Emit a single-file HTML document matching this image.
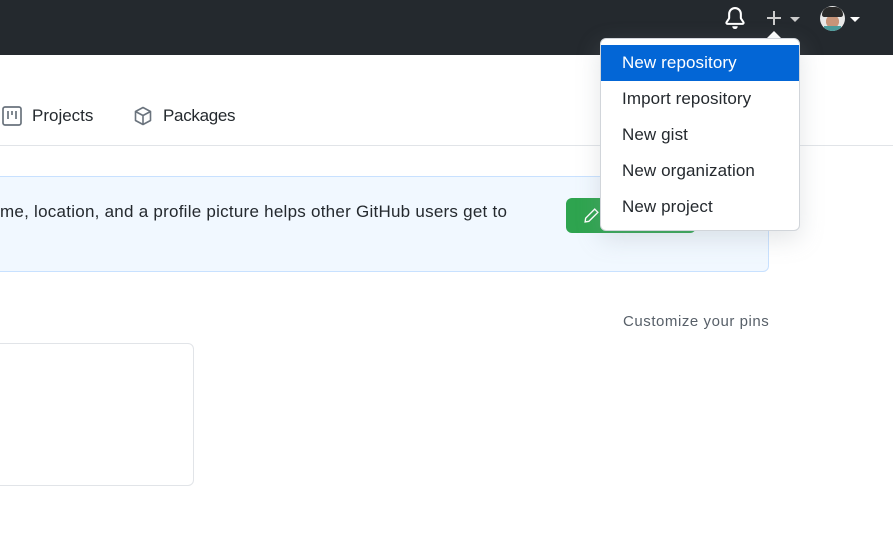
<!DOCTYPE html>
<html><head><meta charset="utf-8"><style>
*{box-sizing:border-box;margin:0;padding:0}
body{width:893px;height:539px;overflow:hidden;background:#fff;font-family:"Liberation Sans",sans-serif;color:#24292e;position:relative}
.hdr{position:absolute;left:0;top:0;width:893px;height:55px;background:#24292e}
.abs{position:absolute}
.tab{position:absolute;top:106px;font-size:17px;color:#24292e}
.line{position:absolute;left:0;top:145px;width:893px;height:1px;background:#e1e4e8}
.banner{position:absolute;left:-10px;top:176px;width:779px;height:96px;background:#f1f8ff;border:1px solid #c8e1ff;border-radius:6px}
.btn{position:absolute;left:566px;top:198px;width:130px;height:35px;background:#2ea44f;border-radius:6px}
.card{position:absolute;left:-10px;top:343px;width:204px;height:143px;border:1px solid #e1e4e8;border-radius:6px}
.dd{position:absolute;left:600px;top:38px;width:200px;height:193px;background:#fff;border:1px solid #d1d5da;border-radius:6px;box-shadow:0 8px 24px rgba(149,157,165,.25);padding-top:6px}
.dd div{height:36px;line-height:36px;padding-left:21px;font-size:17px;color:#24292e;letter-spacing:0.1px}
.dd .act{background:#0366d6;color:#fff}
.caret{position:absolute;left:767px;top:31px;width:0;height:0;border-left:7px solid transparent;border-right:7px solid transparent;border-bottom:7px solid #fff}
</style></head><body>
<div class="hdr">
 <svg class="abs" style="left:724px;top:7px" width="22" height="22" viewBox="0 0 16 16"><path fill="#fff" d="M8 16a2 2 0 001.985-1.75c.017-.137-.097-.25-.235-.25h-3.5c-.138 0-.252.113-.235.25A2 2 0 008 16zM3 5a5 5 0 0110 0v2.947c0 .05.015.098.042.139l1.703 2.555A1.518 1.518 0 0113.482 13H2.518a1.518 1.518 0 01-1.263-2.36l1.703-2.554A.25.25 0 003 7.947V5zm5-3.5A3.5 3.5 0 004.5 5v2.947c0 .346-.102.683-.294.97l-1.703 2.556a.018.018 0 00.015.027h10.964a.018.018 0 00.015-.027l-1.703-2.555a1.75 1.75 0 01-.294-.97V5A3.5 3.5 0 008 1.5z"/></svg>
 <svg class="abs" style="left:766px;top:10px" width="16" height="16" viewBox="0 0 16 16"><path d="M8 1v14M1 8h14" stroke="#ccc" stroke-width="2"/></svg>
 <div class="abs" style="left:790px;top:17px;border-left:5px solid transparent;border-right:5px solid transparent;border-top:5px solid #ccc"></div>
 <div class="abs" style="left:820px;top:6px;width:25px;height:25px;border-radius:50%;background:radial-gradient(circle at 50% 62%,#c79478 0 32%,#e8e8e8 34%);overflow:hidden"><div style="position:absolute;left:2px;top:1px;width:21px;height:10px;background:#2a2a2a;border-radius:10px 10px 3px 3px"></div><div style="position:absolute;left:4px;top:20px;width:17px;height:6px;background:#4a9a9a"></div></div>
 <div class="abs" style="left:850px;top:17px;border-left:5px solid transparent;border-right:5px solid transparent;border-top:5px solid #fff"></div>
</div>
<svg class="abs" style="left:2px;top:106px" width="20" height="20" viewBox="0 0 20 20"><rect x="1" y="1" width="18" height="18" rx="2" fill="none" stroke="#6a737d" stroke-width="1.7"/><path d="M6 5v8M10 5v4M14 5v8" stroke="#6a737d" stroke-width="1.7"/></svg>
<div class="tab" style="left:32px">Projects</div>
<svg class="abs" style="left:133px;top:106px" width="20" height="20" viewBox="0 0 20 20"><path d="M10 1.5l7.5 4v9L10 18.5l-7.5-4v-9z M2.5 5.5L10 9.5l7.5-4 M10 9.5v9" fill="none" stroke="#6a737d" stroke-width="1.6" stroke-linejoin="round"/></svg>
<div class="tab" style="left:163px;letter-spacing:-0.3px">Packages</div>
<div class="line"></div>
<div class="banner"></div>
<div class="abs" style="left:0;top:202px;font-size:17px;white-space:nowrap;letter-spacing:0.25px">me, location, and a profile picture helps other GitHub users get to</div>
<div class="btn"><svg class="abs" style="left:17px;top:9px" width="17" height="17" viewBox="0 0 16 16"><path d="M11 2l3 3-8.5 8.5L2 14l.5-3.5z" fill="none" stroke="#fff" stroke-width="1.3"/></svg></div>
<div class="abs" style="left:623px;top:313px;font-size:15px;color:#586069;letter-spacing:0.55px">Customize your pins</div>
<div class="card"></div>
<div class="caret"></div>
<div class="dd">
 <div class="act">New repository</div>
 <div>Import repository</div>
 <div>New gist</div>
 <div>New organization</div>
 <div>New project</div>
</div>
</body></html>
